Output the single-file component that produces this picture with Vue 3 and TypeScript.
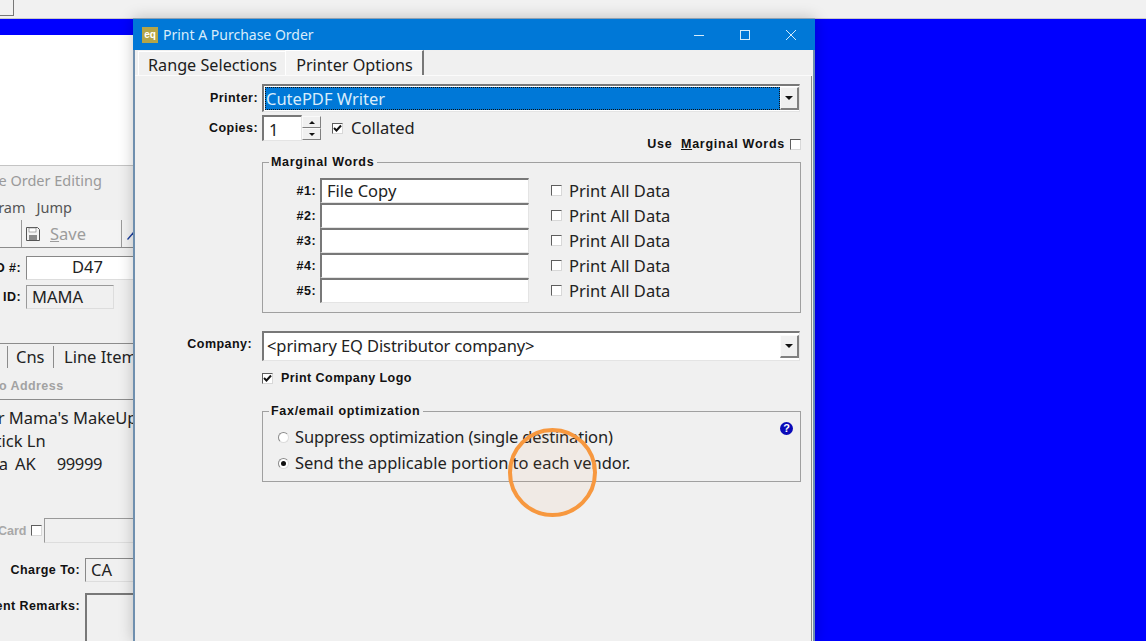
<script setup lang="ts">
const marginalRows = [
  { id: '#1:', value: 'File Copy' },
  { id: '#2:', value: '' },
  { id: '#3:', value: '' },
  { id: '#4:', value: '' },
  { id: '#5:', value: '' }
];
</script>

<template>
  <div class="desktop">
    <!-- strip of the main app behind everything -->
    <div class="top-strip"><span class="strip-box"></span></div>

    <div class="back-white"></div>

    <!-- purchase order window, mostly hidden behind the dialog -->
    <div class="po-window">
      <div class="po-title">Purchase Order Editing</div>
      <div class="po-menu"><span>Program</span><span>Jump</span></div>
      <div class="po-toolbar">
        <div class="tool-save">
          <svg width="16" height="16" viewBox="0 0 16 16">
            <path d="M1.5 1.5h11l2 2v11h-13z" fill="#f4f4f4" stroke="#555" />
            <rect x="4" y="9" width="8" height="5" fill="#8a8a8a" />
            <rect x="4" y="2" width="7" height="4" fill="#fff" stroke="#777" stroke-width=".6" />
          </svg>
          <span class="save-text"><u>S</u>ave</span>
        </div>
        <div class="tool-next">
          <svg width="12" height="16" viewBox="0 0 12 16"><path d="M0 13l6-7 1 1-6 7z" fill="#1c3f9e" /></svg>
        </div>
      </div>
      <div class="po-field first">
        <span class="bold-label">PO #:</span>
        <span class="inset po-num">D47</span>
      </div>
      <div class="po-field second">
        <span class="bold-label">ID:</span>
        <span class="inset po-id">MAMA</span>
      </div>
      <div class="po-tabs">
        <span class="po-tab hist">Hist</span>
        <span class="po-tab cns">Cns</span>
        <span class="po-tab items">Line Items</span>
      </div>
      <div class="po-address-head">Ship To Address</div>
      <div class="po-address">
        <div class="addr-name">Your Mama's MakeUp</div>
        <div class="addr-street">123 Lipstick Ln</div>
        <div class="addr-city"><span>Alaska</span><span>AK</span><span>99999</span></div>
      </div>
      <div class="po-card">
        <span class="card-label">Card</span>
        <span class="check"></span>
        <span class="inset card-input"></span>
      </div>
      <div class="po-field charge">
        <span class="bold-label">Charge To:</span>
        <span class="inset charge-input">CA</span>
      </div>
      <div class="po-field remarks">
        <span class="bold-label">Client Remarks:</span>
        <span class="inset remarks-input"></span>
      </div>
    </div>

    <!-- print dialog -->
    <div class="dialog">
      <div class="titlebar">
        <span class="app-icon">eq</span>
        <span class="title-text">Print A Purchase Order</span>
        <div class="win-buttons">
          <svg width="12" height="12" viewBox="0 0 12 12"><path d="M1 6.5h10" stroke="#d4ebfa" fill="none" /></svg>
          <svg width="12" height="12" viewBox="0 0 12 12"><rect x="1.5" y="1.5" width="9" height="9" stroke="#d4ebfa" fill="none" /></svg>
          <svg width="12" height="12" viewBox="0 0 12 12"><path d="M1 1l10 10M11 1L1 11" stroke="#d4ebfa" fill="none" /></svg>
        </div>
      </div>

      <div class="dialog-body">
        <div class="tabs">
          <span class="tab">Range Selections</span>
          <span class="tab active">Printer Options</span>
        </div>

        <div class="form">
          <label class="bold-label row-label printer-label">Printer:</label>
          <div class="combo printer-combo">
            <span class="combo-value selected">CutePDF Writer</span>
            <span class="combo-btn"><i></i></span>
          </div>

          <label class="bold-label row-label copies-label">Copies:</label>
          <div class="copies-row">
            <span class="inset copies-input">1</span>
            <span class="spinner">
              <span class="spin"><i class="up"></i></span>
              <span class="spin"><i></i></span>
            </span>
            <span class="check checked collated-check">
              <svg width="9" height="9" viewBox="0 0 9 9"><path d="M1 4l2.5 2.5L8 1.5" stroke="#111" stroke-width="2" fill="none" /></svg>
            </span>
            <span class="option-text">Collated</span>
          </div>

          <div class="use-row">
            <span class="bold-label">Use&nbsp; <u>M</u>arginal Words</span>
            <span class="check"></span>
          </div>

          <fieldset class="group marginal">
            <legend class="bold-label">Marginal Words</legend>
            <div v-for="row in marginalRows" :key="row.id" class="marginal-row">
              <span class="bold-label num">{{ row.id }}</span>
              <span class="inset word-input">{{ row.value }}</span>
              <span class="check"></span>
              <span class="option-text">Print All Data</span>
            </div>
          </fieldset>

          <label class="bold-label row-label company-label">Company:</label>
          <div class="combo company-combo">
            <span class="combo-value">&lt;primary EQ Distributor company&gt;</span>
            <span class="combo-btn"><i></i></span>
          </div>

          <div class="logo-row">
            <span class="check checked">
              <svg width="9" height="9" viewBox="0 0 9 9"><path d="M1 4l2.5 2.5L8 1.5" stroke="#111" stroke-width="2" fill="none" /></svg>
            </span>
            <span class="bold-label">Print Company Logo</span>
          </div>

          <fieldset class="group fax">
            <legend class="bold-label">Fax/email optimization</legend>
            <span class="help-icon">?</span>
            <div class="radio-row suppress">
              <span class="radio"></span>
              <span class="option-text">Suppress optimization (single destination)</span>
            </div>
            <div class="radio-row">
              <span class="radio on"></span>
              <span class="option-text">Send the applicable portion to each vendor.</span>
            </div>
          </fieldset>
        </div>
      </div>
    </div>

    <!-- click highlight over the dialog -->
    <div class="click-ring"></div>
  </div>
</template>

<style>
html,
body {
  margin: 0;
  overflow: hidden;
}
</style>

<style scoped>
.desktop {
  position: relative;
  width: 1146px;
  height: 641px;
  overflow: hidden;
  background: #0000ff;
  font-family: "Noto Sans", "Open Sans", sans-serif;
  color: #222;
}

.top-strip {
  position: absolute;
  left: 0;
  top: 0;
  width: 100%;
  height: 18px;
  background: #f1f1f1;
  border-bottom: 1px solid #c8c8c8;
}

.strip-box {
  display: block;
  width: 13px;
  height: 15px;
  border-right: 1px solid #777;
  border-bottom: 1px solid #777;
}

.back-white {
  position: absolute;
  left: 0;
  top: 35px;
  width: 133px;
  height: 130px;
  background: #fff;
}

.bold-label {
  font-family: "Liberation Sans", Arial, sans-serif;
  font-weight: 700;
  font-size: 12.5px;
  letter-spacing: 0.44px;
  color: #111;
  white-space: nowrap;
}

.inset {
  box-sizing: border-box;
  display: block;
  background: #fff;
  border-style: solid;
  border-color: #787878 #e4e4e4 #e4e4e4 #787878;
  border-width: 2px 1px 1px 2px;
  white-space: nowrap;
  overflow: hidden;
}

.check {
  box-sizing: border-box;
  display: inline-flex;
  align-items: center;
  justify-content: center;
  flex: none;
  width: 11px;
  height: 11px;
  background: #fff;
  border-style: solid;
  border-color: #5e5e5e #d8d8d8 #d8d8d8 #5e5e5e;
  border-width: 1px;
}

.check svg {
  display: block;
}

.option-text {
  font-size: 16.5px;
  line-height: 22px;
  color: #222;
  white-space: nowrap;
}

/* window behind the dialog */
.po-window {
  position: absolute;
  left: -300px;
  top: 165px;
  width: 433px;
  height: 476px;
  box-sizing: border-box;
  background: #f0f0f0;
  border-top: 1px solid #c4c4c4;
  overflow: hidden;
}

.po-title {
  margin: 4px 0 0 244px;
  font-size: 14.5px;
  line-height: 20px;
  color: #9a9a9a;
  white-space: nowrap;
}

.po-menu {
  display: flex;
  gap: 11px;
  justify-content: flex-start;
  margin: 7px 0 0 266px;
  font-size: 14.5px;
  line-height: 20px;
  color: #555;
}

.po-toolbar {
  display: flex;
  height: 27px;
  margin-top: 3px;
  border-bottom: 1px solid #8c8c8c;
  padding-left: 321px;
  background: #f3f3f3;
}

.tool-save {
  flex: none;
  display: flex;
  align-items: center;
  gap: 9px;
  width: 101px;
  padding-left: 3px;
  border-left: 1px solid #9a9a9a;
  border-right: 1px solid #9a9a9a;
  box-sizing: border-box;
}

.save-text {
  font-size: 16.5px;
  color: #9c9c9c;
}

.tool-next {
  display: flex;
  align-items: center;
  padding-left: 5px;
}

.po-field {
  display: flex;
  align-items: center;
  height: 24px;
}

.po-field.first {
  margin-top: 8px;
}

.po-field.second {
  margin-top: 5px;
}

.po-field .bold-label {
  box-sizing: border-box;
  width: 321px;
  text-align: right;
  flex: none;
}

.po-num {
  flex: none;
  box-sizing: border-box;
  width: 130px;
  height: 24px;
  margin-left: 5px;
  padding-left: 45px;
  font-size: 16.5px;
  line-height: 20px;
  border-width: 1px;
  border-color: #888 #ddd #ddd #888;
}

.po-id {
  flex: none;
  width: 88px;
  height: 24px;
  margin-left: 5px;
  padding-left: 5px;
  font-size: 16.5px;
  line-height: 21px;
  background: #f0f0f0;
  border-width: 1px;
  border-color: #9a9a9a #ddd #ddd #9a9a9a;
}

.po-tabs {
  display: flex;
  align-items: center;
  height: 26px;
  margin-top: 34px;
  border-top: 1px solid #8c8c8c;
  padding-left: 262px;
  font-size: 16.5px;
  line-height: 24px;
}

.po-tab {
  flex: none;
  box-sizing: border-box;
  height: 22px;
  line-height: 22px;
  border-right: 1px solid #8c8c8c;
  white-space: nowrap;
  overflow: hidden;
}

.po-tab.hist {
  width: 46px;
}

.po-tab.cns {
  width: 46px;
  padding-left: 8px;
}

.po-tab.items {
  padding-left: 10px;
  border-right: none;
}

.po-address-head {
  margin-top: 5px;
  padding: 3px 0 5px 259px;
  height: 16px;
  font-family: "Liberation Sans", Arial, sans-serif;
  font-weight: 700;
  font-size: 12.5px;
  line-height: 16px;
  letter-spacing: 0.44px;
  color: #a2a2a2;
  border-bottom: 1px solid #8c8c8c;
  white-space: nowrap;
}

.po-address {
  margin-top: 6px;
  font-size: 16.5px;
  line-height: 23px;
  white-space: nowrap;
}

.addr-name {
  padding-left: 269px;
}

.addr-street {
  padding-left: 232px;
}

.addr-city {
  display: flex;
  justify-content: flex-start;
  padding-left: 243px;
}

.addr-city span:nth-child(1) {
  width: 65px;
  text-align: right;
}

.addr-city span:nth-child(2) {
  margin-left: 7px;
}

.addr-city span:nth-child(3) {
  margin-left: 21px;
  letter-spacing: -0.4px;
}

.po-card {
  display: flex;
  align-items: center;
  height: 25px;
  margin-top: 43px;
  padding-left: 298px;
}

.card-label {
  flex: none;
  width: 33px;
  font-family: "Liberation Sans", Arial, sans-serif;
  font-weight: 700;
  font-size: 12.5px;
  color: #a8a8a8;
}

.card-input {
  flex: none;
  width: 120px;
  height: 25px;
  margin-left: 2px;
  background: #f0f0f0;
  border-width: 1px;
  border-color: #999 #ddd #ddd #999;
}

.po-field.charge {
  margin-top: 15px;
}

.po-field.charge .bold-label,
.po-field.remarks .bold-label {
  width: 380px;
}

.charge-input {
  flex: none;
  width: 80px;
  height: 24px;
  margin-left: 5px;
  padding-left: 5px;
  font-size: 16.5px;
  line-height: 21px;
  background: #f0f0f0;
  border-width: 1px;
  border-color: #888 #ddd #ddd #888;
}

.po-field.remarks {
  height: 48px;
  align-items: flex-start;
  margin-top: 11px;
}

.po-field.remarks .bold-label {
  padding-top: 6px;
}

.remarks-input {
  flex: none;
  width: 80px;
  height: 60px;
  margin-left: 5px;
  background: #f0f0f0;
}

/* print dialog */
.dialog {
  position: absolute;
  left: 133px;
  top: 18px;
  width: 682px;
  height: 623px;
  box-sizing: border-box;
  display: flex;
  flex-direction: column;
  background: #f0f0f0;
  border-top: 1px solid #8ea0b2;
  box-shadow: 0 0 14px rgba(0, 0, 0, 0.22);
  overflow: hidden;
}

.titlebar {
  flex: none;
  display: flex;
  align-items: center;
  height: 31px;
  padding-left: 9px;
  background: #0078d7;
}

.app-icon {
  box-sizing: border-box;
  width: 16px;
  height: 16px;
  background: #b3a548;
  color: #fff;
  font-family: "Liberation Sans", Arial, sans-serif;
  font-weight: 700;
  font-size: 10px;
  line-height: 15px;
  text-align: center;
}

.title-text {
  margin-left: 5px;
  font-size: 14px;
  color: #d8ecfb;
  white-space: nowrap;
}

.win-buttons {
  display: flex;
  gap: 34px;
  margin-left: auto;
  padding-right: 18px;
}

.win-buttons svg {
  display: block;
}

.dialog-body {
  flex: 1;
  display: flex;
  flex-direction: column;
  min-height: 0;
  border-left: 2px solid #6f8fae;
  border-right: 2px solid #6f8fae;
}

.tabs {
  flex: none;
  display: flex;
  align-items: flex-end;
  height: 26px;
  padding-left: 3px;
  box-sizing: border-box;
  border-bottom: 1px solid #fbfbfb;
  margin-right: 1px;
}

.tab {
  box-sizing: border-box;
  height: 24px;
  padding: 0 8px 0 9px;
  font-size: 16.2px;
  line-height: 27px;
  color: #1c1c1c;
  white-space: nowrap;
  background: #f0f0f0;
  border-top: 1px solid #fff;
  border-left: 1px solid #fff;
}

.tab.active {
  height: 25px;
  padding: 0 9px 0 10px;
  line-height: 29px;
  background: #f4f4f4;
  border-right: 2px solid #777;
}

.form {
  flex: 1;
  display: grid;
  grid-template-columns: 127px 539px;
  align-content: start;
  padding-top: 8px;
  margin-right: 1px;
  border-right: 1px solid #8a8a8a;
}

.row-label {
  text-align: right;
  padding-right: 4px;
  align-self: center;
}

.combo {
  box-sizing: border-box;
  display: flex;
  align-items: stretch;
  margin-right: 1px;
  background: #fff;
  border-style: solid;
  border-color: #787878 #e4e4e4 #e4e4e4 #787878;
  border-width: 2px 1px 1px 2px;
}

.printer-combo {
  height: 28px;
  padding: 1px 0 1px 1px;
}

.combo-value {
  flex: 1;
  font-size: 16.5px;
  line-height: 24px;
  padding-left: 1px;
  white-space: nowrap;
}

.combo-value.selected {
  background: #0078d7;
  color: #d8ecfb;
  outline: 1px dotted #111;
  outline-offset: -1px;
}

.combo-btn {
  box-sizing: border-box;
  flex: none;
  display: flex;
  align-items: center;
  justify-content: center;
  width: 19px;
  background: #f0f0f0;
  border-style: solid;
  border-color: #fafafa #808080 #808080 #fafafa;
  border-width: 1px 2px 2px 1px;
}

.combo-btn i,
.spin i {
  display: block;
  width: 0;
  height: 0;
  border-left: 4px solid transparent;
  border-right: 4px solid transparent;
  border-top: 4px solid #111;
}

.copies-label {
  margin-top: 3px;
}

.copies-row {
  display: flex;
  align-items: center;
  height: 26px;
  margin-top: 3px;
}

.copies-input {
  width: 40px;
  height: 26px;
  padding-left: 5px;
  font-size: 16.5px;
  line-height: 25px;
}

.spinner {
  display: flex;
  flex-direction: column;
  width: 19px;
  height: 24px;
}

.spin {
  box-sizing: border-box;
  display: flex;
  flex: 1;
  align-items: center;
  justify-content: center;
  border-style: solid;
  border-color: #fafafa #808080 #808080 #fafafa;
  border-width: 1px;
}

.spin i {
  border-left-width: 3px;
  border-right-width: 3px;
  border-top-width: 3px;
}

.spin i.up {
  border-top: 0;
  border-bottom: 3px solid #111;
}

.collated-check {
  margin: 0 8px 0 11px;
}

.use-row {
  grid-column: 2;
  display: flex;
  align-items: center;
  justify-content: flex-end;
  gap: 5px;
  height: 14px;
  margin-top: -4px;
}

.use-row .bold-label {
  letter-spacing: 0.75px;
}

.group {
  grid-column: 2;
  box-sizing: border-box;
  min-width: 0;
  margin: 0;
  border: 1px solid #a0a0a0;
  border-radius: 0;
}

.group legend {
  padding: 0 3px 0 2px;
  line-height: 14px;
  letter-spacing: 0.7px;
}

.marginal {
  height: 158px;
  margin-top: 4px;
  padding: 9px 0 0 0;
}

.marginal legend {
  margin-left: 6px;
}

.marginal-row {
  display: flex;
  align-items: center;
  height: 25px;
}

.num {
  box-sizing: border-box;
  width: 53px;
  padding-top: 1px;
  text-align: right;
}

.word-input {
  width: 209px;
  height: 25px;
  margin-left: 4px;
  padding-left: 5px;
  font-size: 16.5px;
  line-height: 22px;
  color: #222;
}

.marginal-row .check {
  margin: 0 7px 0 22px;
}

.company-label {
  margin-top: 18px;
  padding-right: 10px;
  padding-bottom: 5px;
}

.company-combo {
  height: 30px;
  margin-top: 18px;
  padding-right: 0;
}

.company-combo .combo-value {
  padding-left: 3px;
  line-height: 26px;
  letter-spacing: -0.1px;
}

.company-combo .combo-btn {
  height: 23px;
  margin-top: 2px;
}

.logo-row {
  grid-column: 2;
  display: flex;
  align-items: center;
  gap: 8px;
  height: 14px;
  margin-top: 10px;
}

.fax {
  position: relative;
  height: 78px;
  margin-top: 19px;
  padding: 6px 0 0 15px;
}

.fax legend {
  margin-left: -9px;
}

.radio-row {
  display: flex;
  align-items: center;
  gap: 6px;
  height: 26px;
}

.radio-row.suppress .option-text {
  letter-spacing: -0.17px;
}

.radio {
  box-sizing: border-box;
  display: flex;
  align-items: center;
  justify-content: center;
  width: 11px;
  height: 11px;
  border-radius: 50%;
  background: #fff;
  border: 1px solid;
  border-color: #8a8a8a #dcdcdc #dcdcdc #8a8a8a;
}

.radio.on::after {
  content: "";
  width: 5px;
  height: 5px;
  border-radius: 50%;
  background: #111;
}

.help-icon {
  position: absolute;
  right: 7px;
  top: 4px;
  width: 13px;
  height: 13px;
  border-radius: 50%;
  background: #0a0ab8;
  color: #fff;
  font-family: "Liberation Sans", Arial, sans-serif;
  font-weight: 700;
  font-size: 11px;
  line-height: 13px;
  text-align: center;
}

.click-ring {
  position: absolute;
  left: 508px;
  top: 428px;
  box-sizing: border-box;
  width: 89px;
  height: 89px;
  border: 4px solid #f7983f;
  border-radius: 50%;
  background: rgba(247, 152, 63, 0.06);
}
</style>
